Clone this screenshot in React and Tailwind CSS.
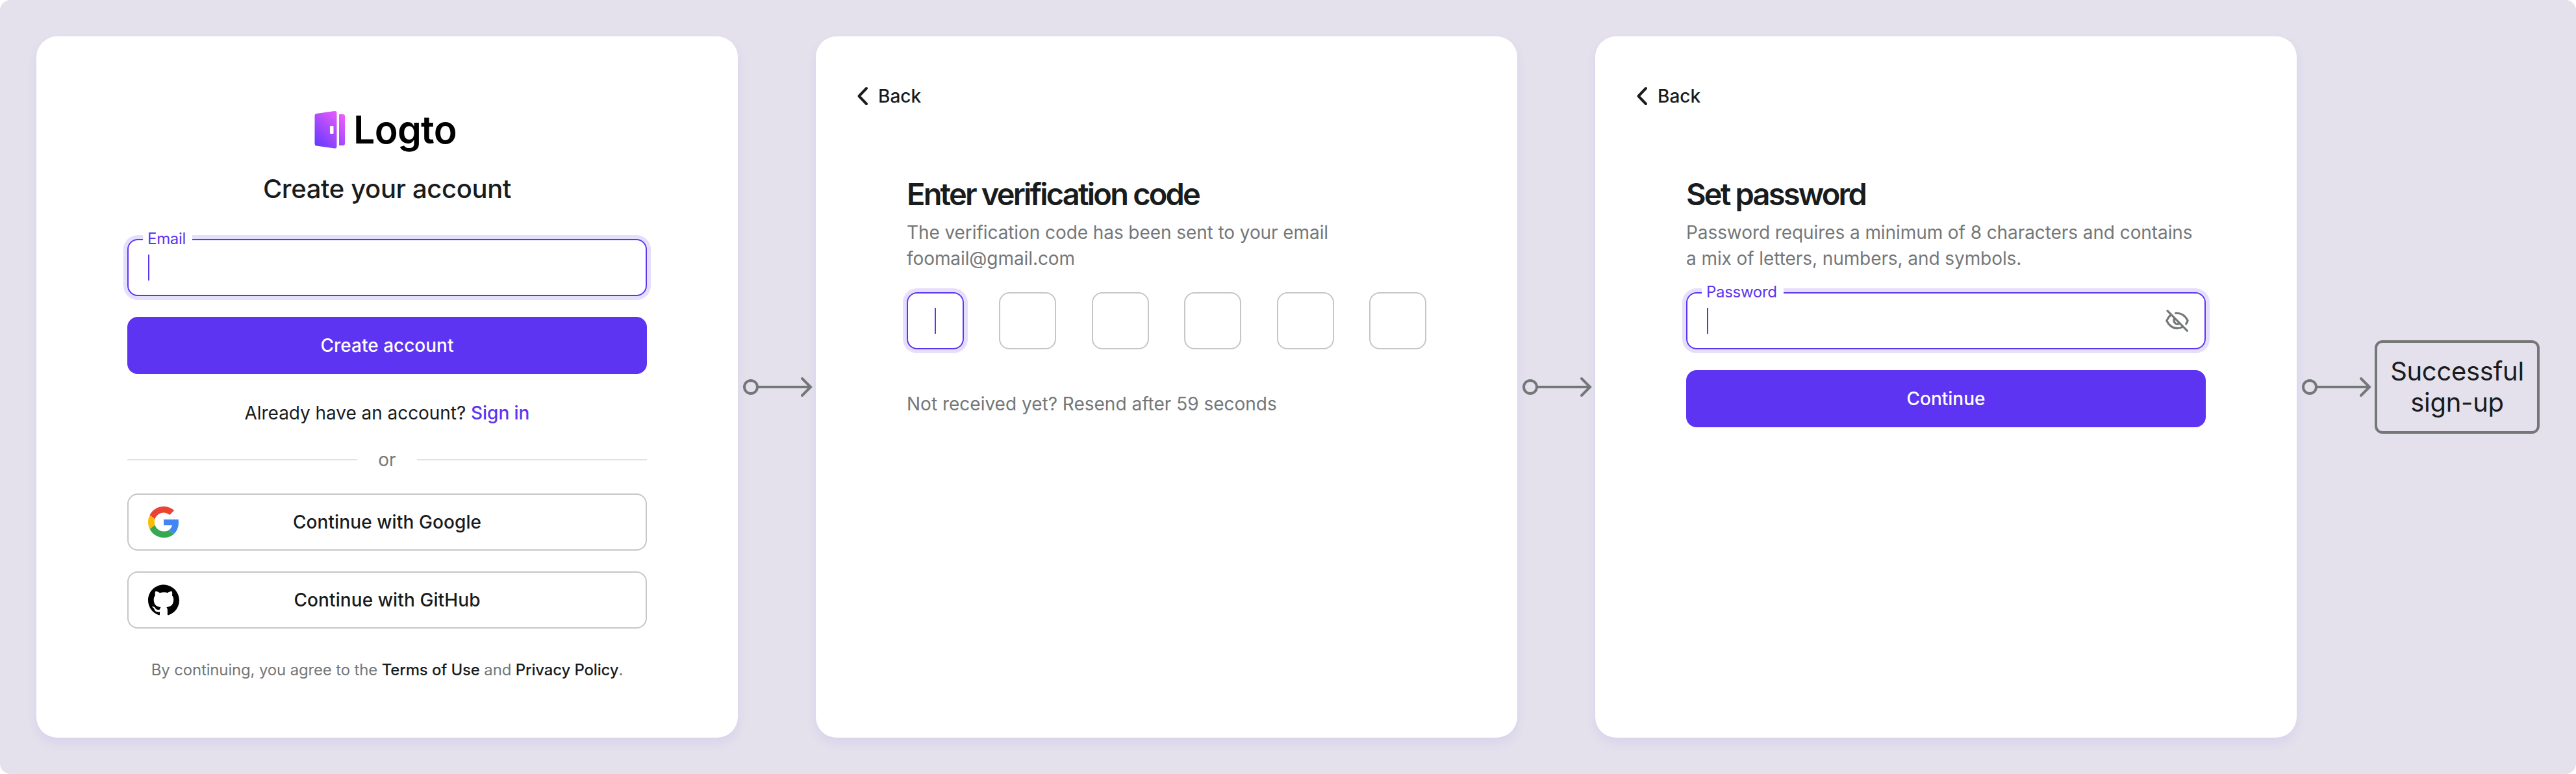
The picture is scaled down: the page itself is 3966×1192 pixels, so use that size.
import React from "react";
import { SiGithub } from "react-icons/si";

function Card({ children, className = "" }) {
  return (
    <section
      className={
        "flex h-[1080px] w-[1080px] shrink-0 flex-col rounded-[32px] bg-white shadow-[0_8px_16px_rgba(93,52,242,0.08)] " +
        className
      }
    >
      {children}
    </section>
  );
}

function Arrow() {
  return (
    <svg viewBox="0 0 120 40" fill="none" stroke="#747778" strokeWidth="4" className="h-10 w-[120px] shrink-0">
      <circle cx="20" cy="20" r="10" />
      <path d="M30 20H112" />
      <path d="M99 7L112 20L99 33" strokeLinecap="round" />
    </svg>
  );
}

function Field({ label, children }) {
  return (
    <div className="relative flex h-[88px] w-[800px] items-center rounded-2xl border-2 border-[#5d34f2] pr-[22px] pl-[30px] shadow-[0_0_0_6px_#e5defd]">
      <span className="absolute -top-[18px] left-[22px] flex h-8 items-center whitespace-nowrap bg-white pr-[10px] pl-[7px] text-[24px] tracking-[-0.3px] text-[#5d34f2]">
        {label}
      </span>
      <span className="h-10 w-0.5 bg-[#5d34f2]" />
      {children}
    </div>
  );
}

function PrimaryButton({ children }) {
  return (
    <button className="flex h-[88px] w-[800px] items-center justify-center rounded-2xl bg-[#5d34f2] text-[28px] font-medium text-white">
      {children}
    </button>
  );
}

function SocialButton({ icon, children }) {
  return (
    <button className="flex h-[88px] w-[800px] items-center rounded-2xl border-2 border-[#c4c7c7] px-[30px] text-[28px] font-medium tracking-[0.1px]">
      {icon}
      <span className="flex-1 pr-12 text-center">{children}</span>
    </button>
  );
}

function LogtoMark() {
  return (
    <svg viewBox="0 0 48 60" className="h-[60px] w-12">
      <defs>
        <linearGradient id="door" x1="0" y1="54" x2="44" y2="8" gradientUnits="userSpaceOnUse">
          <stop stopColor="#6338ff" />
          <stop offset="1" stopColor="#ed5cfb" />
        </linearGradient>
      </defs>
      <path
        fillRule="evenodd"
        fill="url(#door)"
        d="M3 5L31 1Q34.500 0.500 34.500 4V55Q34.500 59 31 58.500L3 54.500Q0.500 54 0.500 51.500V8Q0.500 5.500 3 5ZM25 24Q24 24 24 25V35Q24 36 25 36H28.500Q29.500 36 29.500 35V25Q29.500 24 28.500 24Z"
      />
      <path fill="url(#door)" d="M38 6H44Q47 6 47 9V51Q47 54 44 54H38Z" />
    </svg>
  );
}

function GoogleIcon() {
  return (
    <svg viewBox="0 0 48 48" className="h-12 w-12 shrink-0">
      <path fill="#EA4335" d="M24 9.500c3.540 0 6.710 1.220 9.210 3.600l6.850-6.850C35.900 2.380 30.470 0 24 0 14.620 0 6.510 5.380 2.560 13.220l7.980 6.190C12.430 13.720 17.740 9.500 24 9.500z" />
      <path fill="#4285F4" d="M46.980 24.550c0-1.570-.15-3.090-.38-4.550H24v9.020h12.940c-.58 2.960-2.260 5.480-4.780 7.180l7.730 6c4.510-4.180 7.090-10.360 7.090-17.650z" />
      <path fill="#FBBC05" d="M10.530 28.590c-.48-1.450-.76-2.990-.76-4.590s.27-3.140.76-4.590l-7.980-6.190C.92 16.460 0 20.120 0 24s.92 7.540 2.560 10.780l7.970-6.190z" />
      <path fill="#34A853" d="M24 48c6.480 0 11.930-2.130 15.890-5.810l-7.730-6c-2.150 1.450-4.920 2.300-8.160 2.300-6.260 0-11.570-4.220-13.470-9.910l-7.980 6.190C6.510 42.620 14.620 48 24 48z" />
    </svg>
  );
}

function Back() {
  return (
    <div className="flex h-10 items-center text-[28px] font-medium">
      <svg viewBox="0 0 20 32" fill="none" stroke="#191c1d" strokeWidth="4" strokeLinecap="round" strokeLinejoin="round" className="h-8 w-5 overflow-visible">
        <path d="M18 4L6.500 16L18 28" />
      </svg>
      <span className="ml-4">Back</span>
    </div>
  );
}

function EyeOff() {
  return (
    <svg viewBox="0 0 40 40" fill="none" stroke="#747778" strokeWidth="3.200" strokeLinecap="round" strokeLinejoin="round" className="ml-auto h-10 w-10">
      <path d="M5 4.700L35.300 35.300" />
      <path d="M17.700 8.400C25 7.400 32 11.500 36.200 19.800Q35.400 22.500 33.700 24.700" />
      <path d="M9.500 11.500Q5.800 15 3.800 20C8 28.500 14 31.700 20.300 31.700Q24.500 31.700 28 29.500" />
      <path d="M15.300 16.800C13.800 22.500 18 26.500 23 24.500" />
    </svg>
  );
}

export default function App() {
  return (
    <div className="h-[1192px] w-[3966px] bg-white font-['Inter',sans-serif] text-[#191c1d]">
      <main className="flex h-full items-center rounded-[16px] bg-[#e4e1ec] pl-14">
        <Card className="items-center">
          <div className="mt-28 flex h-16 w-[224px] items-center">
            <LogtoMark />
            <span className="ml-3 text-[59px] leading-[64px] font-semibold tracking-[-0.7px] text-black">Logto</span>
          </div>
          <h1 className="mt-[31px] text-[40px] leading-[56px] font-medium tracking-[-0.38px]">Create your account</h1>
          <div className="mt-[49px]">
            <Field label="Email" />
          </div>
          <div className="mt-8">
            <PrimaryButton>Create account</PrimaryButton>
          </div>
          <p className="mt-10 text-[28px] leading-10 tracking-[-0.05px]">
            Already have an account? <a className="font-medium text-[#5d34f2]">Sign in</a>
          </p>
          <div className="mt-8 flex h-10 w-[800px] items-center text-[28px] text-[#747778]">
            <span className="h-0.5 flex-1 bg-[#e1e3e3]" />
            <span className="w-[92px] text-center">or</span>
            <span className="h-0.5 flex-1 bg-[#e1e3e3]" />
          </div>
          <div className="mt-8 flex flex-col gap-8">
            <SocialButton icon={<GoogleIcon />}>Continue with Google</SocialButton>
            <SocialButton icon={<SiGithub className="h-12 w-12 text-black" />}>Continue with GitHub</SocialButton>
          </div>
          <p className="mt-12 text-[24px] leading-8 tracking-[-0.16px] text-[#747778]">
            By continuing, you agree to the <a className="font-medium text-[#191c1d]">Terms of Use</a> and{" "}
            <a className="font-medium text-[#191c1d]">Privacy Policy</a>.
          </p>
        </Card>
        <Arrow />
        <Card>
          <div className="mt-[72px] ml-[60px]">
            <Back />
          </div>
          <div className="ml-[140px]">
            <h1 className="mt-[99px] text-[47px] leading-[64px] font-semibold tracking-[-2.8px]">Enter verification code</h1>
            <p className="mt-[7px] text-[28px] leading-10 tracking-[-0.08px] text-[#747778]">
              The verification code has been sent to your email
              <br />
              foomail@gmail.com
            </p>
            <div className="mt-8 flex w-[800px] justify-between">
              <div className="flex h-[88px] w-[88px] items-center justify-center rounded-2xl border-2 border-[#5d34f2] shadow-[0_0_0_6px_#e5defd]">
                <span className="h-10 w-0.5 bg-[#5d34f2]" />
              </div>
              {[1, 2, 3, 4, 5].map((n) => (
                <div key={n} className="h-[88px] w-[88px] rounded-2xl border-2 border-[#c4c7c7]" />
              ))}
            </div>
            <p className="mt-16 text-[28px] leading-10 text-[#747778]">Not received yet? Resend after 59 seconds</p>
          </div>
        </Card>
        <Arrow />
        <Card>
          <div className="mt-[72px] ml-[60px]">
            <Back />
          </div>
          <div className="ml-[140px]">
            <h1 className="mt-[99px] text-[47px] leading-[64px] font-semibold tracking-[-2.8px]">Set password</h1>
            <p className="mt-[7px] text-[28px] leading-10 tracking-[-0.08px] text-[#747778]">
              Password requires a minimum of 8 characters and contains
              <br />a mix of letters, numbers, and symbols.
            </p>
            <div className="mt-8">
              <Field label="Password">
                <EyeOff />
              </Field>
            </div>
            <div className="mt-8">
              <PrimaryButton>Continue</PrimaryButton>
            </div>
          </div>
        </Card>
        <Arrow />
        <div className="flex h-36 w-[254px] items-center justify-center rounded-xl border-4 border-[#747778] text-center text-[40px] leading-[48px] tracking-[-0.3px]">
          <span>
            Successful
            <br />
            sign-up
          </span>
        </div>
      </main>
    </div>
  );
}
